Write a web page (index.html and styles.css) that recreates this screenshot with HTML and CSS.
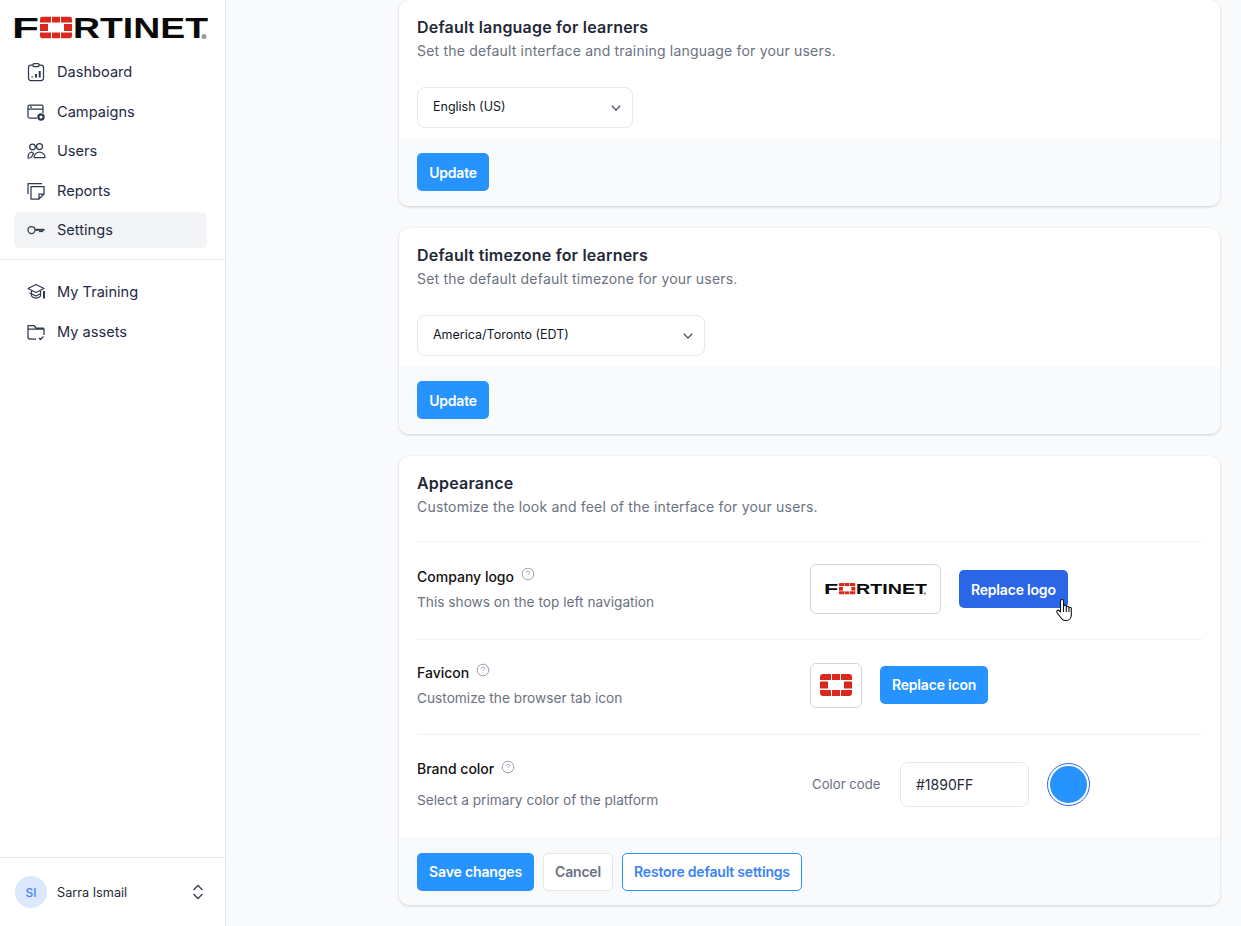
FILE: index.html
```html
<!DOCTYPE html>
<html lang="en">
<head>
  <meta charset="UTF-8" />
  <title>Settings</title>
  <link rel="stylesheet" href="styles.css">
</head>
<body>
  <svg class="defs" width="0" height="0">
    <symbol id="fort-mark" viewBox="0 0 32 22">
      <path d="M0 3a3 3 0 0 1 3-3h8v6H0z"/><rect x="12" width="8" height="6"/><path d="M21 0h8a3 3 0 0 1 3 3v3H21z"/>
      <rect y="7.500" width="8" height="7"/><rect x="24" y="7.500" width="8" height="7"/>
      <path d="M0 16h11v6H3a3 3 0 0 1-3-3z"/><rect x="12" y="16" width="8" height="6"/><path d="M21 16h11v3a3 3 0 0 1-3 3h-8z"/>
    </symbol>
  </svg>

  <aside class="sidebar">
    <div class="brand">
      <svg class="brand-logo" viewBox="-2 0 196 34" width="196" height="34" role="img" aria-label="Fortinet">
        <text class="logo-letters" x="-2" y="27" textLength="27" lengthAdjust="spacingAndGlyphs">F</text>
        <use href="#fort-mark" x="26" y="5.500" width="32" height="22" fill="#da291c"/>
        <text class="logo-letters" x="59" y="27" textLength="135" lengthAdjust="spacingAndGlyphs">RTINET</text>
        <circle cx="190" cy="25.500" r="2.500" fill="#9a9a9a"/>
      </svg>
    </div>
    <nav class="nav">
      <a class="nav-item">
        <svg class="nav-icon" viewBox="0 0 18 18"><rect x="1.500" y="2" width="15" height="15.500" rx="2.500"/><rect x="6" y=".6" width="6" height="3" rx="1" fill="#fff"/><path class="thick" d="M5.300 14.500v-1M9 14.500v-3.500M12.700 14.500V8"/></svg>
        Dashboard
      </a>
      <a class="nav-item">
        <svg class="nav-icon" viewBox="0 0 18 18"><path d="M10 15H2.500A1.500 1.500 0 0 1 1 13.500v-10A1.500 1.500 0 0 1 2.500 2h12A1.500 1.500 0 0 1 16 3.500V10M1 6h15M3 4h2"/><circle class="cog" cx="14" cy="14" r="2.600"/></svg>
        Campaigns
      </a>
      <a class="nav-item">
        <svg class="nav-icon" viewBox="0 0 18 18"><circle cx="5.500" cy="5" r="2.800"/><circle cx="12.500" cy="4.500" r="3"/><path d="M1 15.500c0-2.500 1.300-5 3.500-5.500l2 1.500-2 3.500c-.5 1-3.500 1.500-3.500.5zM7 15.500c0-3 2.500-5.500 5.500-5.500s5.500 2.500 5.500 5.500z"/></svg>
        Users
      </a>
      <a class="nav-item">
        <svg class="nav-icon" viewBox="0 0 18 18"><path d="M1 12V1.500h14M4 4.500h13v7.500l-5 5H4zM17 12h-5v5"/></svg>
        Reports
      </a>
      <a class="nav-item active">
        <svg class="nav-icon" viewBox="0 0 18 18"><circle cx="4.500" cy="9" r="3.500"/><path class="thick" d="M8 8.800h9.500"/><path d="M12 10.500h4"/></svg>
        Settings
      </a>
    </nav>
    <div class="nav-rule"></div>
    <nav class="nav nav-lower">
      <a class="nav-item">
        <svg class="nav-icon" viewBox="0 0 18 18"><path d="M9 1.500 1 5.500l8 4 8-4zM4.500 8v5c1 1.500 3 2 4.500 2s3.500-.5 4.500-2V8M2.500 10 9 13l5-2.500"/><path class="thick" d="M17 8v7.500"/></svg>
        My Training
      </a>
      <a class="nav-item">
        <svg class="nav-icon" viewBox="0 0 18 18"><path d="M9 16H3a2 2 0 0 1-2-2V2.500h6l2 2.500h7a1.500 1.500 0 0 1 1 1v6M1 6h16M12 15l1.500 1.500 3-3"/></svg>
        My assets
      </a>
    </nav>
    <div class="account">
      <span class="avatar">SI</span>
      <span class="account-name">Sarra Ismail</span>
      <svg class="updown" viewBox="0 0 12 16" width="12" height="16"><path d="M1.500 6 6 1.500 10.500 6M1.500 10 6 14.500 10.500 10"/></svg>
    </div>
  </aside>

  <main class="main">
    <section class="card">
      <div class="card-body">
        <h2>Default language for learners</h2>
        <p class="desc">Set the default interface and training language for your users.</p>
        <div class="select select-lang">English (US)
          <svg viewBox="0 0 10 6" width="10" height="6"><path d="M.8.8 5 5 9.200.8"/></svg>
        </div>
      </div>
      <div class="card-foot">
        <button class="btn btn-primary btn-update">Update</button>
      </div>
    </section>

    <section class="card">
      <div class="card-body">
        <h2>Default timezone for learners</h2>
        <p class="desc">Set the default default timezone for your users.</p>
        <div class="select select-zone">America/Toronto (EDT)
          <svg viewBox="0 0 10 6" width="10" height="6"><path d="M.8.8 5 5 9.200.8"/></svg>
        </div>
      </div>
      <div class="card-foot">
        <button class="btn btn-primary btn-update">Update</button>
      </div>
    </section>

    <section class="card">
      <div class="card-head">
        <h2>Appearance</h2>
        <p class="desc">Customize the look and feel of the interface for your users.</p>
      </div>

      <div class="row row-logo">
        <div class="row-label">
          <h3>Company logo <svg class="help" viewBox="0 0 14 14"><circle cx="7" cy="7" r="5.800"/><path d="M5.400 5.600c0-2 3.200-2 3.200-.1 0 1.100-1.600 1.200-1.600 2.400M7 9.700v.3"/></svg></h3>
          <p class="row-desc">This shows on the top left navigation</p>
        </div>
        <div class="row-control">
          <div class="logo-box">
            <svg viewBox="-2 0 196 34" width="103" height="18" role="img" aria-label="Fortinet">
              <text class="logo-letters" x="-2" y="27" textLength="27" lengthAdjust="spacingAndGlyphs">F</text>
              <use href="#fort-mark" x="26" y="5.500" width="32" height="22" fill="#da291c"/>
              <text class="logo-letters" x="59" y="27" textLength="135" lengthAdjust="spacingAndGlyphs">RTINET</text>
              <circle cx="190" cy="25.500" r="2.500" fill="#9a9a9a"/>
            </svg>
          </div>
          <div class="replace-wrap">
            <button class="btn btn-hover">Replace logo</button>
            <svg class="hand" viewBox="0 0 18 24" width="18" height="24"><path d="M5.500 14V3a1.500 1.500 0 0 1 3 0v7-1.500a1.400 1.400 0 0 1 2.800 0V11v-1.500a1.300 1.300 0 0 1 2.600 0V11v-.5a1.200 1.200 0 0 1 2.400 0V17c0 3-2 5.500-5 5.500H10c-2.500 0-3.500-1.500-5-4L2 14.500c-1-1.500.8-3 2-1.900zM8.500 10v4M11.300 11v3M13.900 11v3"/></svg>
          </div>
        </div>
      </div>

      <div class="row row-favicon">
        <div class="row-label">
          <h3>Favicon <svg class="help" viewBox="0 0 14 14"><circle cx="7" cy="7" r="5.800"/><path d="M5.400 5.600c0-2 3.200-2 3.200-.1 0 1.100-1.600 1.200-1.600 2.400M7 9.700v.3"/></svg></h3>
          <p class="row-desc">Customize the browser tab icon</p>
        </div>
        <div class="row-control">
          <div class="favicon-box">
            <svg width="32" height="22" fill="#da291c"><use href="#fort-mark"/></svg>
          </div>
          <button class="btn btn-primary btn-lift">Replace icon</button>
        </div>
      </div>

      <div class="row row-color">
        <div class="row-label">
          <h3 class="flat">Brand color <svg class="help" viewBox="0 0 14 14"><circle cx="7" cy="7" r="5.800"/><path d="M5.400 5.600c0-2 3.200-2 3.200-.1 0 1.100-1.600 1.200-1.600 2.400M7 9.700v.3"/></svg></h3>
          <p class="row-desc">Select a primary color of the platform</p>
        </div>
        <div class="row-control">
          <span class="color-label">Color code</span>
          <div class="color-input">#1890FF</div>
          <span class="swatch"></span>
        </div>
      </div>

      <div class="card-foot foot-actions">
        <button class="btn btn-primary btn-save btn-lift">Save changes</button>
        <button class="btn btn-plain btn-lift">Cancel</button>
        <button class="btn btn-outline btn-lift">Restore default settings</button>
      </div>
    </section>
  </main>
</body>
</html>
```

FILE: styles.css
```css
* {
  box-sizing: border-box;
}
html, body {
  height: 100%;
}
body {
  margin: 0;
  display: flex;
  height: 926px;
  overflow: hidden;
  background: #f9fafb;
  color: #1f2937;
  font-family: Inter, "Liberation Sans", sans-serif;
}
h2, h3, p {
  margin: 0;
}
.defs {
  position: absolute;
}

/* Sidebar */
.sidebar {
  width: 226px;
  flex: none;
  display: flex;
  flex-direction: column;
  background: #fff;
  border-right: 1px solid #e5e7eb;
}
.brand {
  height: 54px;
  padding: 11px 0 0 12px;
}
.brand-logo {
  display: block;
}
.logo-letters {
  font-family: "Liberation Sans", sans-serif;
  font-weight: 700;
  font-size: 29px;
  fill: #0a0a0a;
}
.nav {
  padding: 0 18px 0 14px;
}
.nav-item {
  display: flex;
  align-items: center;
  gap: 12px;
  height: 36px;
  margin-bottom: 3.500px;
  padding-left: 13px;
  border-radius: 6px;
  font-size: 14.600px;
  color: #1f2a44;
}
.nav-item.active {
  background: #f3f4f6;
}
.nav-icon {
  width: 18px;
  height: 18px;
  flex: none;
  fill: none;
  stroke: #2f3a4c;
  stroke-width: 1.250;
  stroke-linejoin: round;
  overflow: visible;
}
.nav-icon .thick {
  stroke-width: 2;
}
.nav-icon .cog {
  stroke-width: 2.200;
  fill: #fff;
}
.nav-rule {
  height: 1px;
  margin-top: 7.500px;
  background: #e5e7eb;
}
.nav-lower {
  padding-top: 14px;
}
.account {
  margin-top: auto;
  height: 69px;
  display: flex;
  align-items: center;
  padding: 0 21px 0 15px;
  border-top: 1px solid #e5e7eb;
}
.avatar {
  width: 32px;
  height: 32px;
  border-radius: 50%;
  background: #dbe8fe;
  color: #4f7cf0;
  font-size: 12px;
  font-weight: 500;
  display: flex;
  align-items: center;
  justify-content: center;
}
.account-name {
  margin-left: 10px;
  font-size: 12.700px;
  flex: 1;
}
.updown {
  fill: none;
  stroke: #374151;
  stroke-width: 1.400;
}

/* Cards */
.main {
  flex: 1;
  padding: 0 21px 0 173px;
}
.card {
  background: #fff;
  border-radius: 10px;
  box-shadow: 0 1px 3px rgba(0, 0, 0, 0.18);
  margin-bottom: 22px;
  overflow: hidden;
}
.card-body {
  height: 139px;
  padding: 18px 18px 0;
}
.card-head {
  height: 85px;
  padding: 18px 18px 0;
}
h2 {
  font-size: 16px;
  line-height: 19px;
  font-weight: 600;
  letter-spacing: 0.2px;
  color: #1f2937;
}
.desc {
  font-size: 14px;
  line-height: 20px;
  margin-top: 4px;
  letter-spacing: 0.19px;
  color: #6b7280;
}
.select {
  display: flex;
  align-items: center;
  justify-content: space-between;
  height: 41px;
  margin-top: 26px;
  padding: 0 11px 2px 15px;
  background: #fff;
  border: 1px solid #e5e7eb;
  border-radius: 8px;
  font-size: 12.500px;
  color: #111827;
}
.select svg {
  margin-top: 2px;
  fill: none;
  stroke: #4b5563;
  stroke-width: 1.300;
}
.select-lang {
  width: 216px;
}
.select-zone {
  width: 288px;
}
.card-foot {
  height: 67px;
  padding-top: 14px;
  background: #f9fafb;
}
.card-body + .card-foot {
  padding-left: 18px;
}
.foot-actions {
  display: flex;
  align-items: flex-start;
  gap: 9px;
  padding-left: 18px;
  border-top: 1px solid #f3f4f6;
}

/* Buttons */
.btn {
  height: 38px;
  padding: 0 12px;
  border: 0;
  border-radius: 5px;
  font-family: inherit;
  font-size: 14px;
  font-weight: 600;
  letter-spacing: -0.2px;
  white-space: nowrap;
}
.btn-primary {
  background: #2693ff;
  color: #fff;
}
.btn-update {
  width: 72px;
}
.btn-save {
  width: 117px;
  letter-spacing: -0.15px;
}
.btn-hover {
  background: #2b66e6;
  color: #fff;
}
.btn-plain {
  width: 70px;
  padding: 0;
  background: #fff;
  border: 1px solid #e5e7eb;
  color: #6b7280;
}
.btn-outline {
  width: 180px;
  padding: 0;
  background: #fff;
  border: 1px solid #2693ff;
  color: #3b82f6;
}
.btn.btn-lift {
  padding-bottom: 2px;
}

/* Appearance rows */
.row {
  display: flex;
  margin: 0 18px;
  border-top: 1px solid #f0f1f3;
}
.row-logo {
  height: 98px;
}
.row-favicon {
  height: 95px;
}
.row-color {
  height: 104px;
}
.row-label {
  width: 393px;
  flex: none;
}
.row-logo .row-label {
  padding-top: 26px;
}
.row-favicon .row-label {
  padding-top: 24px;
}
.row-color .row-label {
  padding-top: 25px;
}
h3 {
  display: flex;
  align-items: flex-start;
  gap: 7px;
  font-size: 14px;
  line-height: 18px;
  font-weight: 500;
  color: #111;
}
.help {
  width: 14px;
  height: 14px;
  margin-top: -1px;
  fill: none;
  stroke: #9ca3af;
  stroke-width: 1;
}
.flat .help {
  margin-top: 0;
}
.row-desc {
  margin-top: 6px;
  font-size: 13.700px;
  line-height: 20px;
  color: #6b7280;
}
.row-color .row-desc {
  margin-top: 12px;
}
.row-control {
  display: flex;
  align-items: center;
}
.row-logo .row-control {
  height: 96px;
  padding-bottom: 2px;
  gap: 18px;
}
.row-favicon .row-control {
  height: 90px;
  gap: 18px;
}
.row-color .row-control {
  height: 98px;
}
.logo-box {
  width: 131px;
  height: 50px;
  display: flex;
  align-items: center;
  justify-content: center;
  border: 1px solid #d1d5db;
  border-radius: 6px;
}
.favicon-box {
  width: 52px;
  height: 45px;
  display: flex;
  align-items: center;
  justify-content: center;
  border: 1px solid #d1d5db;
  border-radius: 6px;
}
.replace-wrap {
  position: relative;
}
.hand {
  position: absolute;
  right: -5px;
  top: 28px;
  fill: #fff;
  stroke: #111;
  stroke-width: 1.100;
  stroke-linejoin: round;
}
.color-label {
  width: 90px;
  padding-left: 2px;
  font-size: 13.200px;
  color: #6b7280;
}
.color-input {
  width: 129px;
  height: 45px;
  display: flex;
  align-items: center;
  padding-left: 15px;
  border: 1px solid #e5e7eb;
  border-radius: 8px;
  font-size: 14px;
  color: #1f2937;
}
.swatch {
  width: 43px;
  height: 43px;
  margin-left: 18px;
  border-radius: 50%;
  background: #2693ff;
  border: 3px solid #fff;
  outline: 1px solid #2b66e6;
  outline-offset: -1px;
}
```
